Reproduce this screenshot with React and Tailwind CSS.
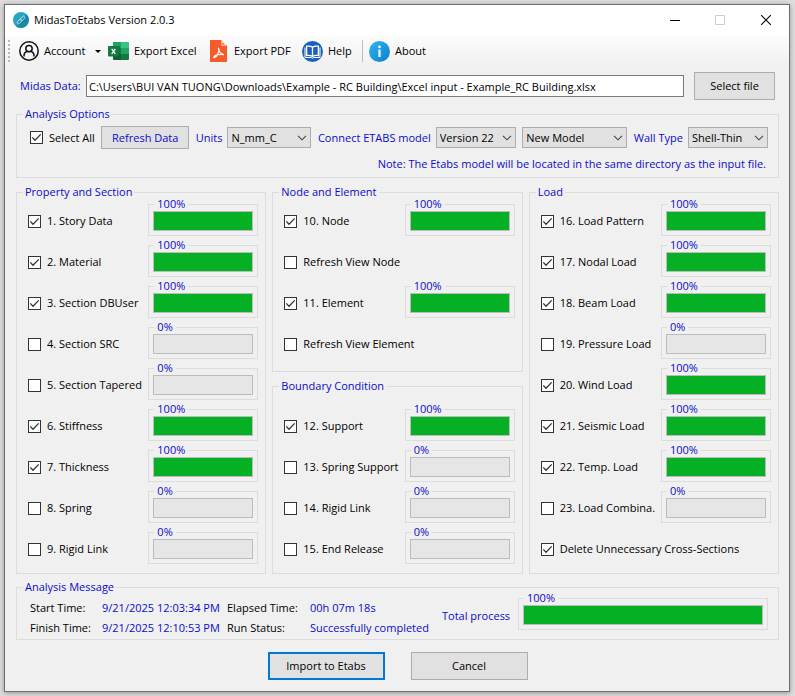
import React from "react";

const propertyItems = [
  ["1. Story Data", true, 100],
  ["2. Material", true, 100],
  ["3. Section DBUser", true, 100],
  ["4. Section SRC", false, 0],
  ["5. Section Tapered", false, 0],
  ["6. Stiffness", true, 100],
  ["7. Thickness", true, 100],
  ["8. Spring", false, 0],
  ["9. Rigid Link", false, 0],
];

const nodeItems = [
  ["10. Node", true, 100],
  ["Refresh View Node", false, null],
  ["11. Element", true, 100],
  ["Refresh View Element", false, null],
];

const boundaryItems = [
  ["12. Support", true, 100],
  ["13. Spring Support", false, 0],
  ["14. Rigid Link", false, 0],
  ["15. End Release", false, 0],
];

const loadItems = [
  ["16. Load Pattern", true, 100],
  ["17. Nodal Load", true, 100],
  ["18. Beam Load", true, 100],
  ["19. Pressure Load", false, 0],
  ["20. Wind Load", true, 100],
  ["21. Seismic Load", true, 100],
  ["22. Temp. Load", true, 100],
  ["23. Load Combina.", false, 0],
  ["Delete Unnecessary Cross-Sections", true, null],
];

function CheckBox({ label, checked, className = "" }) {
  return (
    <label className={"flex h-4 items-center gap-1.5 whitespace-nowrap " + className}>
      <span className="grid shrink-0">
        <input
          type="checkbox"
          defaultChecked={checked}
          className="peer col-start-1 row-start-1 size-[13px] appearance-none border border-[#333] bg-white"
        />
        <svg
          viewBox="0 0 13 13"
          className="pointer-events-none invisible col-start-1 row-start-1 size-[13px] peer-checked:visible"
          fill="none"
          stroke="#333"
          strokeWidth="1.3"
        >
          <path d="M2.3 6.4 5 9.2 10.7 3.4" />
        </svg>
      </span>
      {label}
    </label>
  );
}

function Progress({ value, name, className = "" }) {
  return (
    <fieldset className={"min-w-0 border border-[#dcdcdc] px-1 pt-[3px] pb-1 " + className}>
      <legend className="ml-px px-[3px] leading-2 text-[#0a0ad2]">{value}%</legend>
      <div
        role="progressbar"
        aria-label={name}
        aria-valuenow={value}
        className="h-5 border border-[#bcbcbc] bg-[#e6e6e6]"
      >
        <div className="h-full bg-[#06b025]" style={{ width: value + "%" }} />
      </div>
    </fieldset>
  );
}

function Group({ title, className = "", children }) {
  return (
    <fieldset className={"min-w-0 border border-[#dcdcdc] " + className}>
      <legend className="ml-1.5 px-0.5 leading-[14px] text-[#0a0ad2]">{title}</legend>
      {children}
    </fieldset>
  );
}

function Items({ items }) {
  return items.map(([label, checked, value]) => (
    <div key={label} className="flex h-[41px] items-start justify-between pr-[7px] pl-[11px]">
      <CheckBox label={label} checked={checked} className="mt-[13px]" />
      {value !== null && <Progress value={value} name={label} className="w-[110px] shrink-0" />}
    </div>
  ));
}

function Select({ label, value, className }) {
  return (
    <span className={"grid shrink-0 " + className}>
      <select
        aria-label={label}
        defaultValue={value}
        className="col-start-1 row-start-1 h-[21px] w-full appearance-none border border-[#adadad] bg-[#e1e1e1] pl-[3px]"
      >
        <option>{value}</option>
      </select>
      <svg
        viewBox="0 0 10 6"
        className="pointer-events-none col-start-1 row-start-1 mr-1 h-1.5 w-2.5 self-center justify-self-end"
        fill="none"
        stroke="#444"
        strokeWidth="1.1"
      >
        <path d="M1 .8 5 4.8 9 .8" />
      </svg>
    </span>
  );
}

function LabelledSelect({ label, value, className }) {
  return (
    <div className="flex shrink-0 items-center gap-[5px]">
      <span className="whitespace-nowrap text-[#0a0ad2]">{label}</span>
      <Select label={label} value={value} className={className} />
    </div>
  );
}

function AppLogo() {
  return (
    <svg viewBox="0 0 16 16" className="size-4">
      <circle cx="8" cy="8" r="8" fill="#2ba5bf" />
      <path d="M13.7 2.4A8 8 0 0 1 3 14.2Z" fill="#1d86a3" />
      <g fill="none" stroke="#a8dfec" strokeWidth=".9" transform="rotate(-45 8 8)">
        <rect x="3.200" y="6.600" width="5.400" height="2.800" rx="1.400" />
        <rect x="7.400" y="6.600" width="5.400" height="2.800" rx="1.400" />
      </g>
    </svg>
  );
}

function AccountIcon() {
  return (
    <svg viewBox="0 0 20 20" className="size-5" fill="none" stroke="#111" strokeWidth="1.5">
      <circle cx="10" cy="10" r="9.2" />
      <circle cx="10" cy="7.6" r="3.2" />
      <path d="M5 15.6V15c0-2.600 1.600-4.300 3.600-4.500M15 15.600V15c0-2.600-1.600-4.300-3.600-4.500" />
    </svg>
  );
}

function ExcelIcon() {
  return (
    <svg viewBox="0 0 21 20" className="h-5 w-[21px]">
      <path d="M5 1h8v6H5z" fill="#21a366" />
      <path d="M13 1h7a1 1 0 0 1 1 1v5h-8z" fill="#33c481" />
      <path d="M5 7h8v6H5z" fill="#107c41" />
      <path d="M13 7h8v6h-8z" fill="#21a366" />
      <path d="M5 13h8v6H6a1 1 0 0 1-1-1z" fill="#185c37" />
      <path d="M13 13h8v5a1 1 0 0 1-1 1h-7z" fill="#107c41" />
      <path d="M5 5h7v11H5z" fill="#0b5a30" opacity=".6" />
      <rect x="0" y="5" width="11" height="10.500" rx="1" fill="#107c41" />
      <path d="m3.700 7.800 3.600 5M7.300 7.800l-3.600 5" stroke="#fff" strokeWidth="1.200" />
    </svg>
  );
}

function PdfIcon() {
  return (
    <svg viewBox="0 0 17 22" className="h-[22px] w-[17px]">
      <path d="M0 0h11.500L17 5.500V22H0z" fill="#fa5a28" />
      <path d="M11.500 0 17 5.500h-5.500z" fill="#fff" />
      <path d="M12.200 1.900v2.900h2.900z" fill="#fa5a28" />
      <path
        d="M3.600 17.400c1-2.200 4.500-3.300 9.700-2.900-2.500-.4-4.900-3-4.700-6.300.9 2.600-1.300 8.300-4 9.300-.6.200-1.200.2-1-.1Z"
        fill="none"
        stroke="#fff"
        strokeWidth="1.300"
        strokeLinejoin="round"
      />
    </svg>
  );
}

function HelpIcon() {
  return (
    <svg viewBox="0 0 21 21" className="size-[21px]">
      <circle cx="10.500" cy="10.500" r="10.500" fill="#1c5fb8" />
      <path
        d="M10.500 6.200C9 5 6.800 4.900 4.600 5.200v9.300c2.200-.3 4.400-.1 5.900 1 1.500-1.100 3.700-1.300 5.900-1V5.200c-2.200-.3-4.400-.2-5.900 1Zm0 0v9.300"
        fill="none"
        stroke="#fff"
        strokeWidth="1.300"
      />
      <path d="M3 6.500v10h6.200l1.300.7 1.300-.7H18v-10" fill="none" stroke="#fff" strokeWidth="1" />
    </svg>
  );
}

function AboutIcon() {
  return (
    <svg viewBox="0 0 21 21" className="size-[21px]">
      <defs>
        <linearGradient id="about" x1="0" y1="0" x2="1" y2="1">
          <stop offset="0" stopColor="#2fb4ee" />
          <stop offset="1" stopColor="#0b7fd2" />
        </linearGradient>
      </defs>
      <circle cx="10.500" cy="10.500" r="10.500" fill="url(#about)" />
      <circle cx="10.500" cy="5.900" r="1.300" fill="#fff" />
      <path d="M9.400 8.600h2.200v7.400H9.400z" fill="#fff" />
    </svg>
  );
}

function ToolButton({ icon, children, className = "" }) {
  return (
    <button type="button" className={"flex shrink-0 items-center gap-[5px] whitespace-nowrap " + className}>
      {icon}
      {children}
    </button>
  );
}

export default function App() {
  return (
    <div className="min-h-screen bg-[#dedede] py-1 pr-[5px] pl-1 font-['Open_Sans','Noto_Sans',sans-serif] text-[11px] leading-4 text-black">
      <div className="border border-[#6e6e6e] bg-[#f0f0f0] shadow-[0_1px_5px_rgba(0,0,0,0.35)]">
        <header className="flex h-[30px] items-center bg-white pl-2">
          <AppLogo />
          <h1 className="ml-[5px] grow">MidasToEtabs Version 2.0.3</h1>
          <div className="flex h-full">
            <button type="button" aria-label="Minimize" className="grid w-[45px] place-items-center">
              <svg viewBox="0 0 10 10" className="size-2.5" stroke="#000">
                <path d="M0 5.500h10" />
              </svg>
            </button>
            <button type="button" aria-label="Maximize" disabled className="grid w-[45px] place-items-center">
              <svg viewBox="0 0 10 10" className="size-2.5" fill="none" stroke="#ccc">
                <path d="M.5.500h9v9h-9z" />
              </svg>
            </button>
            <button type="button" aria-label="Close" className="grid w-[47px] place-items-center">
              <svg viewBox="0 0 10 10" className="size-2.5" stroke="#000" strokeWidth="1.100">
                <path d="m0 0 10 10M10 0 0 10" />
              </svg>
            </button>
          </div>
        </header>

        <nav className="flex h-8 items-center bg-linear-to-b from-[#fdfdfd] to-[#f0f0f0] pl-[3px]">
          <span className="mr-[9px] h-[22px] border-l-2 border-dotted border-[#b8b8b8]" />
          <ToolButton icon={<AccountIcon />} className="w-[89px]">
            <span className="w-[46px] text-left">Account</span>
            <svg viewBox="0 0 6 3" className="h-[3px] w-1.5">
              <path d="M0 0h6L3 3z" />
            </svg>
          </ToolButton>
          <ToolButton icon={<ExcelIcon />} className="w-[102px]">Export Excel</ToolButton>
          <ToolButton icon={<PdfIcon />} className="w-[92px] gap-[7px]">Export PDF</ToolButton>
          <ToolButton icon={<HelpIcon />} className="w-[60px]">Help</ToolButton>
          <span className="mr-1.5 h-[22px] border-l border-[#bdbdbd]" />
          <ToolButton icon={<AboutIcon />}>About</ToolButton>
        </nav>

        <main className="pt-[5px] pr-2.5 pb-[11px] pl-[11px]">
          <div className="flex items-center pr-1 pl-1">
            <label htmlFor="midas" className="w-[66px] shrink-0 whitespace-nowrap text-[#0a0ad2]">
              Midas Data:
            </label>
            <input
              id="midas"
              type="text"
              defaultValue="C:\Users\BUI VAN TUONG\Downloads\Example - RC Building\Excel input - Example_RC Building.xlsx"
              className="h-[22px] min-w-0 grow border border-[#7a7a7a] bg-white px-0.5"
            />
            <button type="button" className="ml-2.5 h-7 w-[81px] shrink-0 border border-[#adadad] bg-[#e1e1e1]">
              Select file
            </button>
          </div>

          <Group title="Analysis Options" className="mt-[7px]">
            <div className="flex items-center justify-between pt-[5px] pr-2.5 pl-[13px]">
              <CheckBox label="Select All" checked />
              <button
                type="button"
                className="h-[23px] w-[88px] shrink-0 border border-[#adadad] bg-[#e1e1e1] whitespace-nowrap text-[#0a0ad2]"
              >
                Refresh Data
              </button>
              <LabelledSelect label="Units" value="N_mm_C" className="w-[84px]" />
              <LabelledSelect label="Connect ETABS model" value="Version 22" className="w-20" />
              <Select label="Target model" value="New Model" className="w-[105px]" />
              <LabelledSelect label="Wall Type" value="Shell-Thin" className="w-20" />
            </div>
            <p className="pt-[7px] pr-3 pb-[5px] text-right text-[#0a0ad2]">
              Note: The Etabs model will be located in the same directory as the input file.
            </p>
          </Group>

          <div className="mt-[7px] grid grid-cols-3 gap-1.5">
            <Group title="Property and Section" className="pt-px pb-1">
              <Items items={propertyItems} />
            </Group>
            <div className="flex min-w-0 flex-col justify-between">
              <Group title="Node and Element" className="pt-px pb-[7px]">
                <Items items={nodeItems} />
              </Group>
              <Group title="Boundary Condition" className="pt-3 pb-1">
                <Items items={boundaryItems} />
              </Group>
            </div>
            <Group title="Load" className="pt-px pb-1">
              <Items items={loadItems} />
            </Group>
          </div>

          <Group title="Analysis Message" className="mt-1.5">
            <div className="flex items-start pr-2.5 pb-px pl-[13px]">
              <dl className="grid shrink-0 grid-cols-[72px_125px_83px_132px] pt-1 leading-5 whitespace-nowrap">
                <dt>Start Time:</dt>
                <dd className="text-[#0a0ad2]">9/21/2025 12:03:34 PM</dd>
                <dt>Elapsed Time:</dt>
                <dd className="text-[#0a0ad2]">00h 07m 18s</dd>
                <dt>Finish Time:</dt>
                <dd className="text-[#0a0ad2]">9/21/2025 12:10:53 PM</dd>
                <dt>Run Status:</dt>
                <dd className="text-[#0a0ad2]">Successfully completed</dd>
              </dl>
              <span className="w-[76px] shrink-0 pt-3.5 whitespace-nowrap text-[#0a0ad2]">Total process</span>
              <Progress value={100} name="Total process" className="grow" />
            </div>
          </Group>

          <div className="mt-3 flex justify-center gap-[26px]">
            <button type="button" className="h-7 w-[117px] border-2 border-[#0078d7] bg-[#e1e1e1]">
              Import to Etabs
            </button>
            <button type="button" className="h-7 w-[117px] border border-[#adadad] bg-[#e1e1e1]">
              Cancel
            </button>
          </div>
        </main>
      </div>
    </div>
  );
}
